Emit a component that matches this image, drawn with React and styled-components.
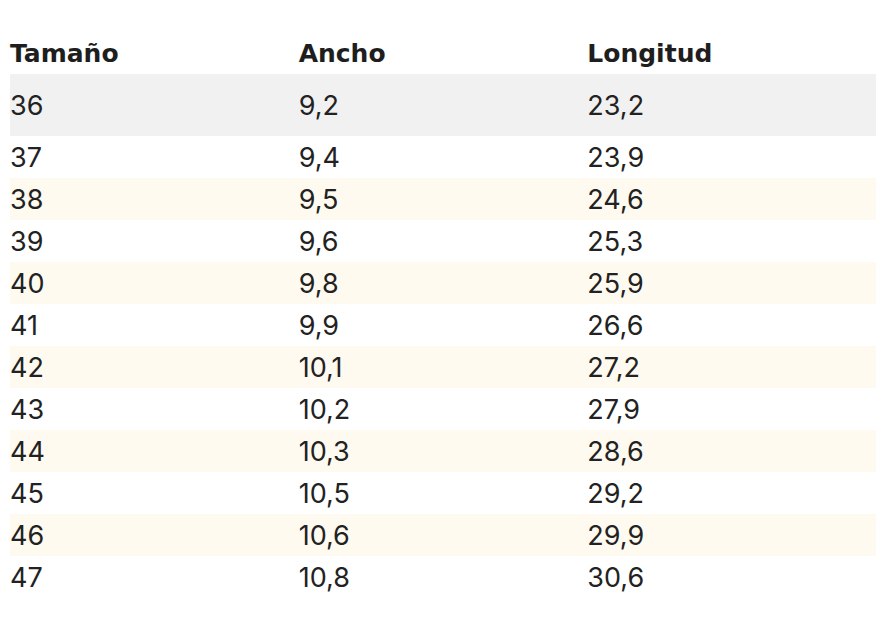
import React from "react";
import styled, { createGlobalStyle } from "styled-components";

const GlobalStyle = createGlobalStyle`
  body {
    margin: 0;
    background: #ffffff;
    font-family: "Inter", "Noto Sans", sans-serif;
    color: #222222;
  }
`;

const sizes = [
  ["36", "9,2", "23,2"],
  ["37", "9,4", "23,9"],
  ["38", "9,5", "24,6"],
  ["39", "9,6", "25,3"],
  ["40", "9,8", "25,9"],
  ["41", "9,9", "26,6"],
  ["42", "10,1", "27,2"],
  ["43", "10,2", "27,9"],
  ["44", "10,3", "28,6"],
  ["45", "10,5", "29,2"],
  ["46", "10,6", "29,9"],
  ["47", "10,8", "30,6"],
];

const Page = styled.div`
  padding: 32px 16px 24px 10px;
`;

const SizeTable = styled.table`
  width: 866px;
  border-collapse: collapse;
  table-layout: fixed;
`;

const HeadCell = styled.th`
  height: 42px;
  padding: 0;
  text-align: left;
  font-family: "DejaVu Sans", "Inter", sans-serif;
  font-size: 25px;
  font-weight: 700;
  color: #1e1e1e;
`;

const rowColors = {
  active: "#f1f1f1",
  plain: "#ffffff",
  tinted: "#fffaf0",
};

const Row = styled.tr`
  background: ${(p) => rowColors[p.$variant]};
  height: ${(p) => (p.$variant === "active" ? "62px" : "42px")};
`;

const Cell = styled.td`
  padding: 0;
  font-size: 27px;
  font-weight: 400;
  color: #222222;
  vertical-align: middle;
`;

export default function App() {
  return (
    <>
      <GlobalStyle />
      <Page>
        <SizeTable>
          <thead>
            <tr>
              <HeadCell>Tamaño</HeadCell>
              <HeadCell>Ancho</HeadCell>
              <HeadCell>Longitud</HeadCell>
            </tr>
          </thead>
          <tbody>
            {sizes.map((row, i) => (
              <Row
                key={row[0]}
                $variant={i === 0 ? "active" : i % 2 === 1 ? "plain" : "tinted"}
              >
                {row.map((v, j) => (
                  <Cell key={j}>{v}</Cell>
                ))}
              </Row>
            ))}
          </tbody>
        </SizeTable>
      </Page>
    </>
  );
}
